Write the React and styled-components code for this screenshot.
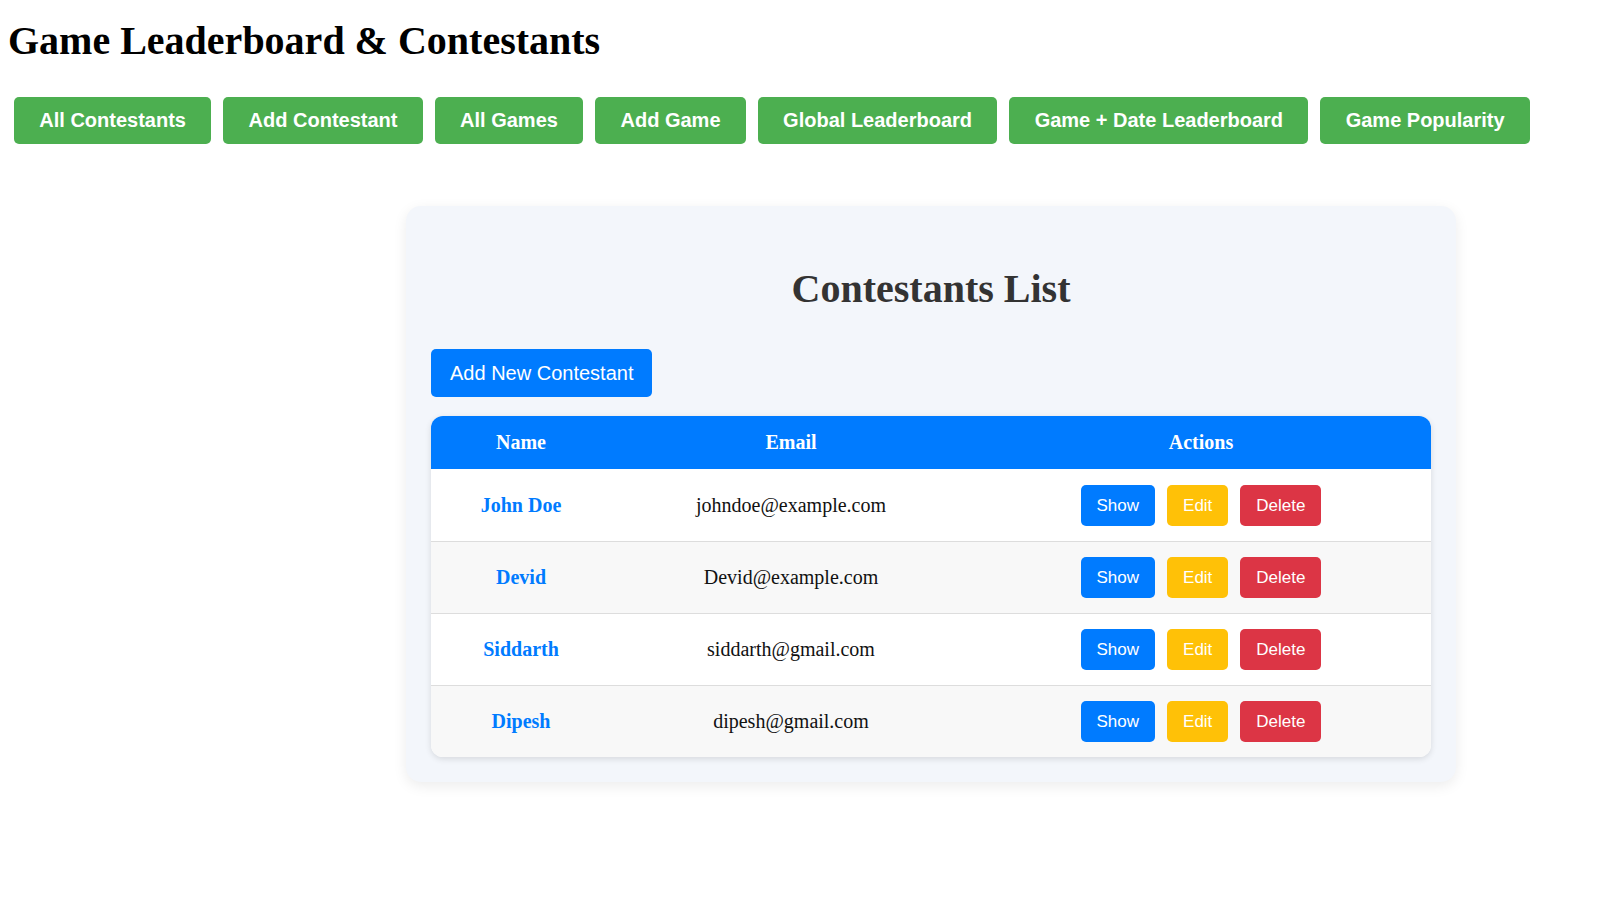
import React from "react";
import styled, { createGlobalStyle } from "styled-components";

const GlobalStyle = createGlobalStyle`
  html, body { margin: 0; padding: 0; background: #ffffff; }
  body { font-family: "Liberation Serif", "Times New Roman", serif; }
  * { box-sizing: border-box; }
`;

const Page = styled.div`
  padding: 0 8px 40px 8px;
`;

const Title = styled.h1`
  margin: 0;
  padding-top: 19px;
  font-family: "Liberation Serif", "Times New Roman", serif;
  font-size: 40px;
  font-weight: 700;
  line-height: 44px;
  color: #000;
`;

const Nav = styled.nav`
  display: flex;
  gap: 12px;
  padding: 0 6px;
  margin-top: 34px;
`;

const NavButton = styled.button`
  font-family: "Liberation Sans", Arial, sans-serif;
  font-size: 20px;
  font-weight: 700;
  line-height: 23px;
  color: #fff;
  background: #4caf50;
  border: none;
  border-radius: 5px;
  padding: 12px 25.3px;
  height: 47px;
  cursor: pointer;
`;

const Card = styled.section`
  width: 1050px;
  margin: 62px 0 0 398px;
  padding: 25px;
  background: #f3f6fb;
  border-radius: 15px;
  box-shadow: 0 4px 14px rgba(0, 0, 0, 0.08);
`;

const CardTitle = styled.h2`
  margin: 36px 0 38px 0;
  text-align: center;
  font-family: "Liberation Serif", "Times New Roman", serif;
  font-size: 40px;
  font-weight: 700;
  line-height: 44px;
  color: #333;
`;

const PrimaryButton = styled.button`
  font-family: "Liberation Sans", Arial, sans-serif;
  font-size: 20px;
  font-weight: 400;
  line-height: 24px;
  color: #fff;
  background: #007bff;
  border: none;
  border-radius: 5px;
  padding: 12px 19px;
  margin-bottom: 19px;
  cursor: pointer;
`;

const TableWrap = styled.div`
  width: 1000px;
  border-radius: 12px;
  overflow: hidden;
  box-shadow: 0 2px 6px rgba(0, 0, 0, 0.12);
  background: #fff;
`;

const Table = styled.table`
  width: 100%;
  border-collapse: separate;
  border-spacing: 0;
  table-layout: fixed;
  font-family: "Liberation Serif", "Times New Roman", serif;
  font-size: 20px;
`;

const Th = styled.th`
  background: #007bff;
  color: #fff;
  font-weight: 700;
  padding: 15px;
  line-height: 23px;
  text-align: center;
  width: ${(p) => p.$w};
`;

const Tr = styled.tr`
  background: ${(p) => (p.$alt ? "#f8f8f8" : "#ffffff")};
`;

const Td = styled.td`
  padding: ${(p) => (p.$first ? "16px 15px 15px 15px" : "15px")};
  border-top: ${(p) => (p.$first ? "none" : "1px solid #dddddd")};
  text-align: center;
  vertical-align: middle;
  color: #111;
  line-height: 23px;
`;

const NameLink = styled.a`
  color: #007bff;
  font-weight: 700;
  text-decoration: none;
`;

const Actions = styled.div`
  display: flex;
  justify-content: center;
  gap: 12px;
`;

const ActionButton = styled.button`
  font-family: "Liberation Sans", Arial, sans-serif;
  font-size: 17px;
  line-height: 19px;
  padding: 11px 16px;
  border: none;
  border-radius: 5px;
  color: #fff;
  background: ${(p) =>
    p.$variant === "edit" ? "#ffc107" : p.$variant === "delete" ? "#dc3545" : "#007bff"};
  cursor: pointer;
`;

const navItems = [
  "All Contestants",
  "Add Contestant",
  "All Games",
  "Add Game",
  "Global Leaderboard",
  "Game + Date Leaderboard",
  "Game Popularity",
];

const contestants = [
  { name: "John Doe", email: "johndoe@example.com" },
  { name: "Devid", email: "Devid@example.com" },
  { name: "Siddarth", email: "siddarth@gmail.com" },
  { name: "Dipesh", email: "dipesh@gmail.com" },
];

export default function App() {
  return (
    <>
      <GlobalStyle />
      <Page>
        <Title>Game Leaderboard &amp; Contestants</Title>
        <Nav>
          {navItems.map((n) => (
            <NavButton key={n}>{n}</NavButton>
          ))}
        </Nav>
        <Card>
          <CardTitle>Contestants List</CardTitle>
          <PrimaryButton>Add New Contestant</PrimaryButton>
          <TableWrap>
            <Table>
              <thead>
                <tr>
                  <Th $w="18%">Name</Th>
                  <Th $w="36%">Email</Th>
                  <Th $w="46%">Actions</Th>
                </tr>
              </thead>
              <tbody>
                {contestants.map((c, i) => {
                  const first = i === 0;
                  return (
                    <Tr key={c.name} $alt={i % 2 === 1}>
                      <Td $first={first}>
                        <NameLink href="#">{c.name}</NameLink>
                      </Td>
                      <Td $first={first}>{c.email}</Td>
                      <Td $first={first}>
                        <Actions>
                          <ActionButton>Show</ActionButton>
                          <ActionButton $variant="edit">Edit</ActionButton>
                          <ActionButton $variant="delete">Delete</ActionButton>
                        </Actions>
                      </Td>
                    </Tr>
                  );
                })}
              </tbody>
            </Table>
          </TableWrap>
        </Card>
      </Page>
    </>
  );
}
